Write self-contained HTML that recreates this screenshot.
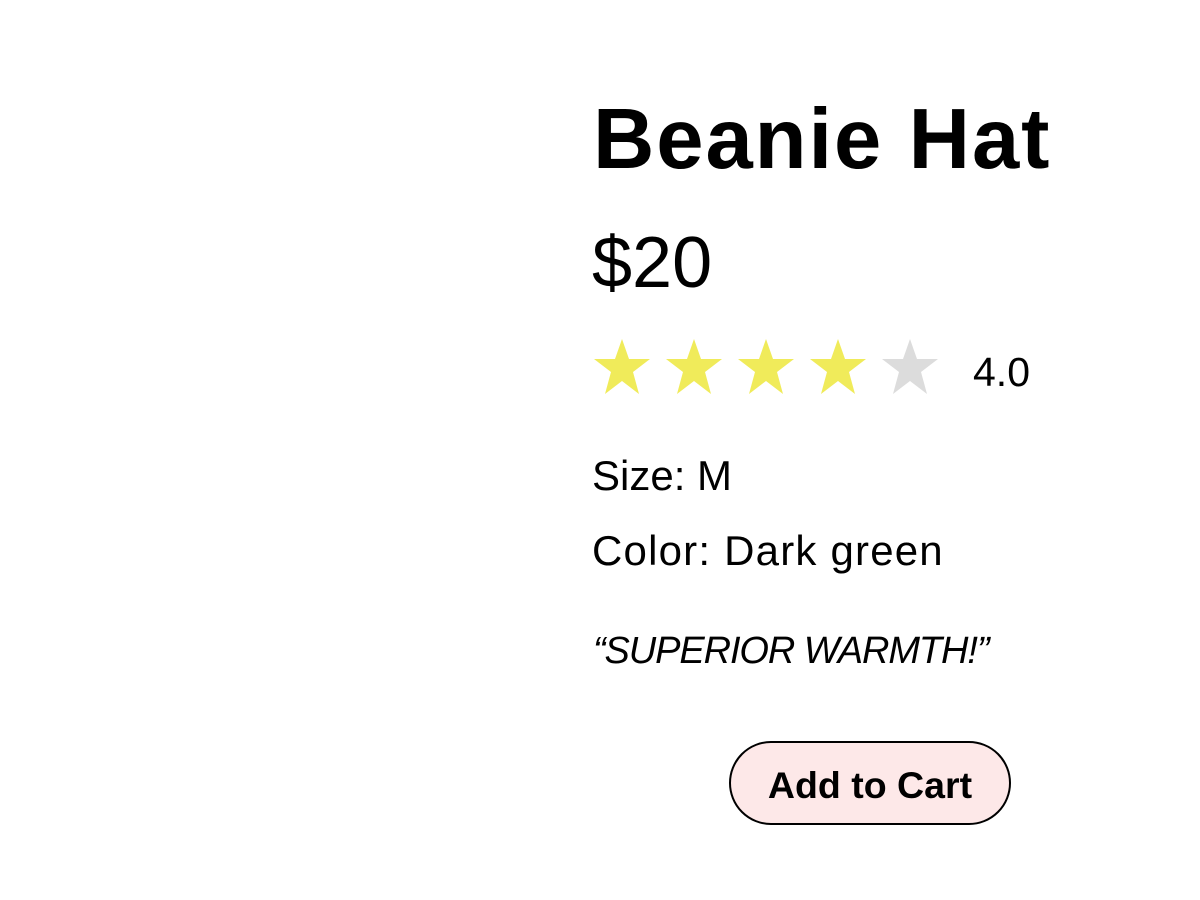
<!DOCTYPE html>
<html><head><style>
body{margin:0;width:1200px;height:900px;background:#fff;font-family:"Liberation Sans",sans-serif;color:#000;position:relative;overflow:hidden}
.a{position:absolute;white-space:nowrap;line-height:1}
h1{position:absolute;left:593px;top:97px;margin:0;font-size:85px;font-weight:bold;line-height:1;letter-spacing:1.9px}
.star{position:absolute;top:338px;width:60px;height:58px}
.btn{position:absolute;left:729px;top:741px;width:278px;height:80px;border:2px solid #000;border-radius:42px;background:#fde8e8;font-weight:bold;font-size:37.5px;text-align:center;line-height:84px}
</style></head><body>
<h1>Beanie Hat</h1>
<div class="a" style="left:592px;top:227px;font-size:72px">$20</div>
<svg class="star" style="left:592px" viewBox="0 0 60 58"><polygon points="30,1 37,21 58,21 41,34 47,56 30,43 13,56 19,34 2,21 23,21" fill="#f0eb5a"/></svg>
<svg class="star" style="left:664px" viewBox="0 0 60 58"><polygon points="30,1 37,21 58,21 41,34 47,56 30,43 13,56 19,34 2,21 23,21" fill="#f0eb5a"/></svg>
<svg class="star" style="left:736px" viewBox="0 0 60 58"><polygon points="30,1 37,21 58,21 41,34 47,56 30,43 13,56 19,34 2,21 23,21" fill="#f0eb5a"/></svg>
<svg class="star" style="left:808px" viewBox="0 0 60 58"><polygon points="30,1 37,21 58,21 41,34 47,56 30,43 13,56 19,34 2,21 23,21" fill="#f0eb5a"/></svg>
<svg class="star" style="left:880px" viewBox="0 0 60 58"><polygon points="30,1 37,21 58,21 41,34 47,56 30,43 13,56 19,34 2,21 23,21" fill="#dcdcdc"/></svg>
<div class="a" style="left:973px;top:352px;font-size:41px">4.0</div>
<div class="a" style="left:592px;top:455px;font-size:42px">Size: M</div>
<div class="a" style="left:592px;top:530px;font-size:42px;letter-spacing:1.2px">Color: Dark green</div>
<div class="a" style="left:593px;top:632px;font-size:38px;font-style:italic;letter-spacing:-1.1px">“SUPERIOR WARMTH!”</div>
<div class="btn">Add to Cart</div>
</body></html>
